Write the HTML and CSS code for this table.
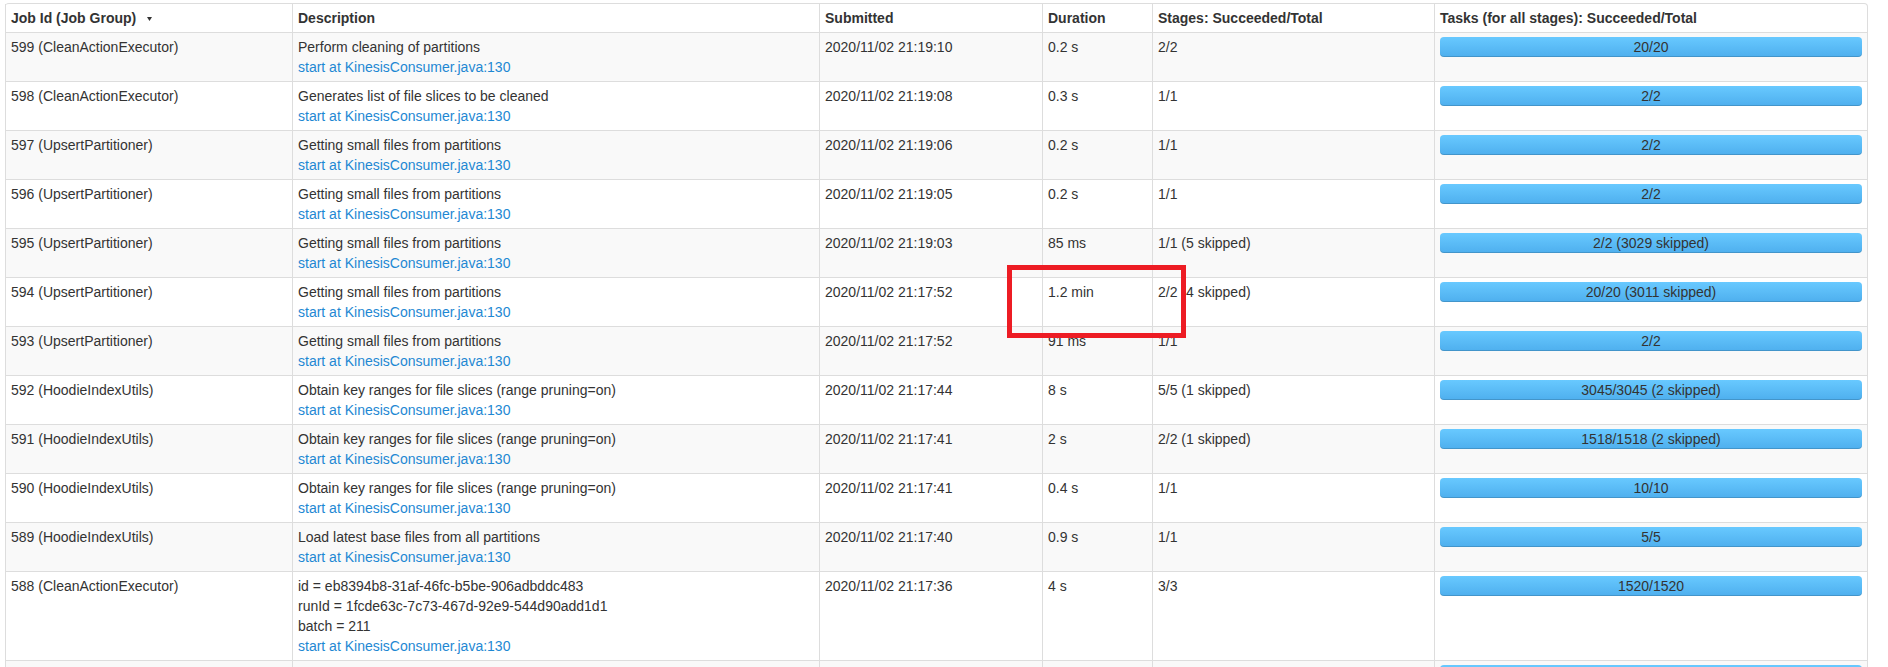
FILE: index.html
```html
<!DOCTYPE html>
<html>
<head>
<meta charset="utf-8">
<title>Spark Jobs</title>
<link rel="stylesheet" href="styles.css">
</head>
<body>
<div class="page">
<table class="jobs">
<thead>
<tr>
<th class="c-id">Job Id (Job Group)<svg class="sort" width="5" height="4" viewBox="0 0 5 4"><polygon points="0,0 5,0 2.5,4" fill="#333"/></svg></th>
<th class="c-desc">Description</th>
<th class="c-sub">Submitted</th>
<th class="c-dur">Duration</th>
<th class="c-stg">Stages: Succeeded/Total</th>
<th class="c-task">Tasks (for all stages): Succeeded/Total</th>
</tr>
</thead>
<tbody>
<tr>
<td>599 (CleanActionExecutor)</td>
<td><div>Perform cleaning of partitions</div><a class="link">start at KinesisConsumer.java:130</a></td>
<td>2020/11/02 21:19:10</td><td>0.2 s</td><td>2/2</td>
<td><div class="progress">20/20</div></td>
</tr>
<tr>
<td>598 (CleanActionExecutor)</td>
<td><div>Generates list of file slices to be cleaned</div><a class="link">start at KinesisConsumer.java:130</a></td>
<td>2020/11/02 21:19:08</td><td>0.3 s</td><td>1/1</td>
<td><div class="progress">2/2</div></td>
</tr>
<tr>
<td>597 (UpsertPartitioner)</td>
<td><div>Getting small files from partitions</div><a class="link">start at KinesisConsumer.java:130</a></td>
<td>2020/11/02 21:19:06</td><td>0.2 s</td><td>1/1</td>
<td><div class="progress">2/2</div></td>
</tr>
<tr>
<td>596 (UpsertPartitioner)</td>
<td><div>Getting small files from partitions</div><a class="link">start at KinesisConsumer.java:130</a></td>
<td>2020/11/02 21:19:05</td><td>0.2 s</td><td>1/1</td>
<td><div class="progress">2/2</div></td>
</tr>
<tr>
<td>595 (UpsertPartitioner)</td>
<td><div>Getting small files from partitions</div><a class="link">start at KinesisConsumer.java:130</a></td>
<td>2020/11/02 21:19:03</td><td>85 ms</td><td>1/1 (5 skipped)</td>
<td><div class="progress">2/2 (3029 skipped)</div></td>
</tr>
<tr>
<td>594 (UpsertPartitioner)</td>
<td><div>Getting small files from partitions</div><a class="link">start at KinesisConsumer.java:130</a></td>
<td>2020/11/02 21:17:52</td><td>1.2 min</td><td>2/2 (4 skipped)</td>
<td><div class="progress">20/20 (3011 skipped)</div></td>
</tr>
<tr>
<td>593 (UpsertPartitioner)</td>
<td><div>Getting small files from partitions</div><a class="link">start at KinesisConsumer.java:130</a></td>
<td>2020/11/02 21:17:52</td><td>91 ms</td><td>1/1</td>
<td><div class="progress">2/2</div></td>
</tr>
<tr>
<td>592 (HoodieIndexUtils)</td>
<td><div>Obtain key ranges for file slices (range pruning=on)</div><a class="link">start at KinesisConsumer.java:130</a></td>
<td>2020/11/02 21:17:44</td><td>8 s</td><td>5/5 (1 skipped)</td>
<td><div class="progress">3045/3045 (2 skipped)</div></td>
</tr>
<tr>
<td>591 (HoodieIndexUtils)</td>
<td><div>Obtain key ranges for file slices (range pruning=on)</div><a class="link">start at KinesisConsumer.java:130</a></td>
<td>2020/11/02 21:17:41</td><td>2 s</td><td>2/2 (1 skipped)</td>
<td><div class="progress">1518/1518 (2 skipped)</div></td>
</tr>
<tr>
<td>590 (HoodieIndexUtils)</td>
<td><div>Obtain key ranges for file slices (range pruning=on)</div><a class="link">start at KinesisConsumer.java:130</a></td>
<td>2020/11/02 21:17:41</td><td>0.4 s</td><td>1/1</td>
<td><div class="progress">10/10</div></td>
</tr>
<tr>
<td>589 (HoodieIndexUtils)</td>
<td><div>Load latest base files from all partitions</div><a class="link">start at KinesisConsumer.java:130</a></td>
<td>2020/11/02 21:17:40</td><td>0.9 s</td><td>1/1</td>
<td><div class="progress">5/5</div></td>
</tr>
<tr>
<td>588 (CleanActionExecutor)</td>
<td><div>id = eb8394b8-31af-46fc-b5be-906adbddc483</div><div>runId = 1fcde63c-7c73-467d-92e9-544d90add1d1</div><div>batch = 211</div><a class="link">start at KinesisConsumer.java:130</a></td>
<td>2020/11/02 21:17:36</td><td>4 s</td><td>3/3</td>
<td><div class="progress">1520/1520</div></td>
</tr>
<tr class="partial">
<td></td><td></td><td></td><td></td><td></td>
<td><div class="progress"></div></td>
</tr>
</tbody>
</table>
<div class="highlight"></div>
</div>
</body>
</html>
```
FILE: styles.css
```css
html, body {
  margin: 0;
  padding: 0;
  overflow: hidden;
  background: #fff;
}
body {
  font-family: "Liberation Sans", Arial, sans-serif;
  font-size: 14px;
  line-height: 20px;
  color: #333;
}
.page {
  position: relative;
  padding: 3px 0 0 5px;
}
.jobs {
  table-layout: fixed;
  width: 1863px;
  border-collapse: separate;
  border-spacing: 0;
  border: 1px solid #ddd;
  border-left: 0;
  border-radius: 4px;
}
.jobs th, .jobs td {
  padding: 4px 5px;
  text-align: left;
  vertical-align: top;
  border-left: 1px solid #ddd;
  border-top: 1px solid #ddd;
  overflow: hidden;
  white-space: nowrap;
}
.jobs th {
  font-weight: bold;
  border-top: 0;
}
.c-id { width: 276px; }
.c-desc { width: 516px; }
.c-sub { width: 212px; }
.c-dur { width: 99px; }
.c-stg { width: 271px; }
.c-task { width: 422px; }
.sort {
  margin-left: 11px;
  vertical-align: 2px;
}
.jobs tbody tr:nth-child(odd) td {
  background: #f9f9f9;
}
.partial td {
  height: 40px;
}
.link {
  display: block;
  color: #1e88d3;
  text-decoration: none;
}
.progress {
  height: 20px;
  border-radius: 4px;
  background: linear-gradient(to bottom, #68c9ff, #4eafee);
  box-shadow: inset 0 -1px 0 rgba(0, 0, 0, 0.15);
  text-align: center;
  line-height: 20px;
  color: #333;
}
.highlight {
  position: absolute;
  left: 1007px;
  top: 265px;
  width: 179px;
  height: 73px;
  box-sizing: border-box;
  border: 5px solid #ed1c24;
}
```
